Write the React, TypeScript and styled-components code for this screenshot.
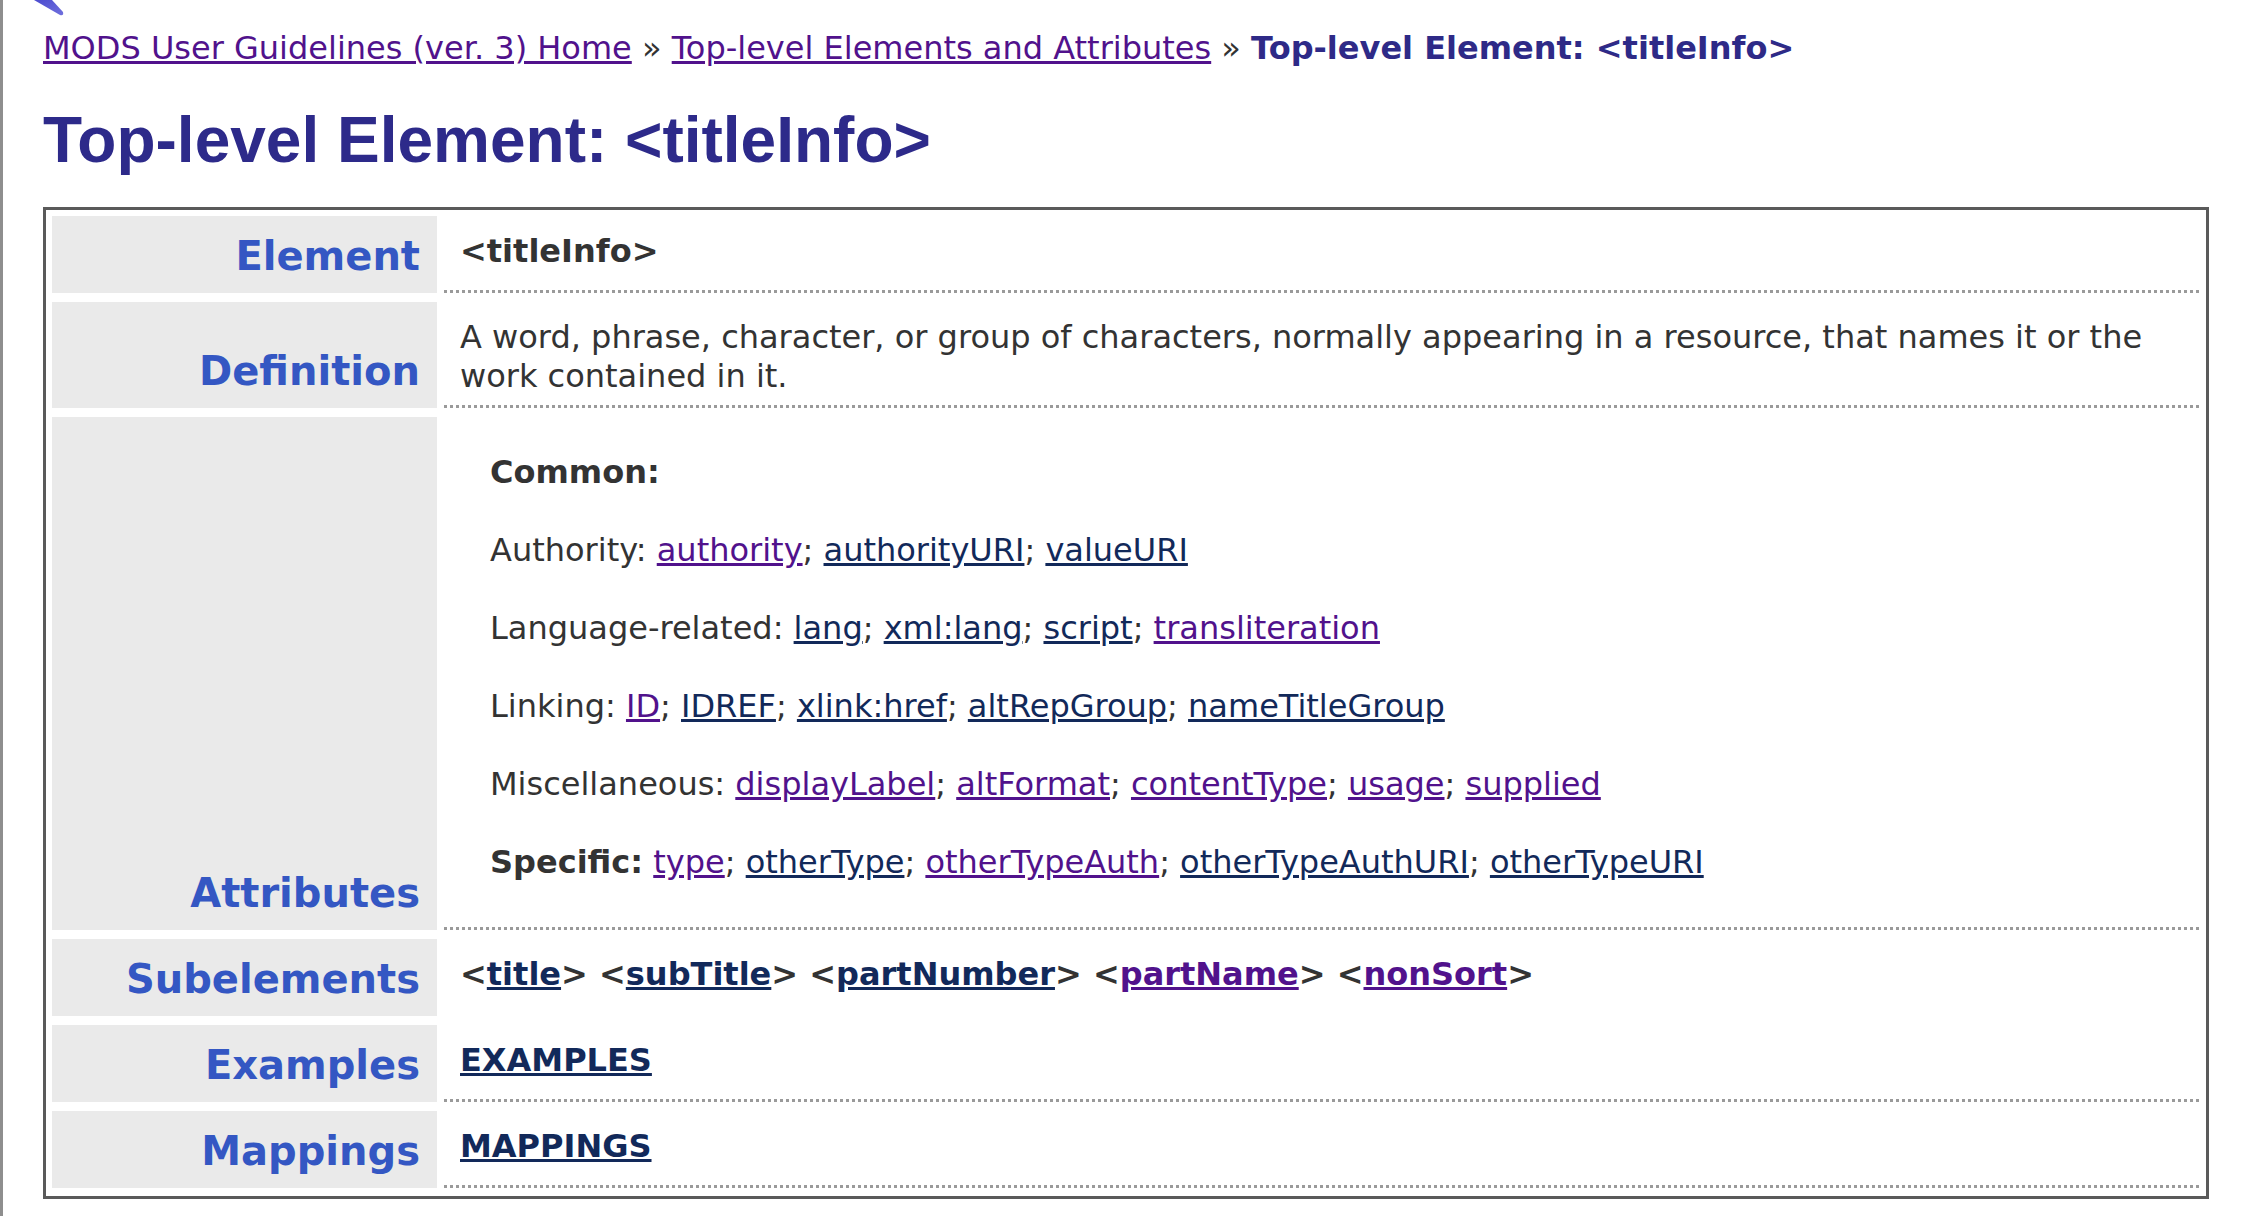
import React from "react";
import styled, { createGlobalStyle } from "styled-components";

const GlobalStyle = createGlobalStyle`
  html, body {
    margin: 0;
    padding: 0;
    background: #ffffff;
  }
  body {
    font-family: "DejaVu Sans", Verdana, sans-serif;
    color: #333333;
  }
`;

const Page = styled.div`
  position: relative;
  box-sizing: border-box;
  min-height: 100vh;
  border-left: 3px solid #8e8e8e;
  padding: 29px 35px 16px 40px;
`;

const CornerMark = styled.svg`
  position: absolute;
  top: 0;
  left: 25px;
  width: 40px;
  height: 18px;
`;

const Breadcrumb = styled.p`
  margin: 0;
  font-size: 32px;
  line-height: 39px;
  color: #333333;
  white-space: nowrap;
`;

const CrumbLink = styled.a`
  color: #51128c;
  text-decoration: underline;
`;

const CrumbCurrent = styled.strong`
  color: #2e2a87;
  font-weight: bold;
`;

const Title = styled.h1`
  margin: 35px 0 30px;
  font-family: "Liberation Sans", Arial, sans-serif;
  font-weight: bold;
  font-size: 64px;
  line-height: normal;
  color: #2d2a8a;
`;

const Table = styled.div`
  display: flex;
  flex-direction: column;
  gap: 9px;
  border: 3px solid #5a5a5a;
  padding: 6px 6px 8px;
`;

const Row = styled.div`
  display: grid;
  grid-template-columns: 385px 1fr;
  column-gap: 7px;
`;

const Label = styled.div`
  display: flex;
  align-items: flex-end;
  justify-content: flex-end;
  background: #eaeaea;
  padding: 17px 17px 13px 10px;
  font-weight: bold;
  font-size: 40px;
  line-height: 47px;
  color: #3457c3;
  text-align: right;
`;

const Content = styled.div<{ $dotted?: boolean }>`
  padding: 16px 16px 12px;
  font-size: 32px;
  line-height: 39px;
  color: #333333;
  background-image: ${(p) =>
    p.$dotted ? "linear-gradient(to right, #9a9a9a 50%, transparent 50%)" : "none"};
  background-size: 6px 3px;
  background-position: 0 100%;
  background-repeat: repeat-x;
`;

const Strong = styled.strong`
  font-weight: bold;
  color: #333333;
`;

const AttrList = styled.div`
  display: flex;
  flex-direction: column;
  gap: 39px;
  padding: 20px 0 36px 30px;
`;

const AttrLine = styled.div`
  white-space: nowrap;
`;

const Link = styled.a<{ $visited?: boolean; $bold?: boolean }>`
  color: ${(p) => (p.$visited ? "#51128c" : "#12295a")};
  font-weight: ${(p) => (p.$bold ? "bold" : "inherit")};
  text-decoration: underline;
`;

type L = { t: string; v?: boolean };

const LinkList: React.FC<{ items: L[] }> = ({ items }) => (
  <>
    {items.map((it, i) => (
      <React.Fragment key={it.t}>
        {i > 0 && "; "}
        <Link href="#" $visited={it.v}>
          {it.t}
        </Link>
      </React.Fragment>
    ))}
  </>
);

const subs: L[] = [
  { t: "title" },
  { t: "subTitle" },
  { t: "partNumber" },
  { t: "partName", v: true },
  { t: "nonSort", v: true },
];

export default function App() {
  return (
    <>
      <GlobalStyle />
      <Page>
        <CornerMark viewBox="0 0 40 18">
          <defs>
            <linearGradient id="cm" x1="0" y1="0" x2="1" y2="1">
              <stop offset="0" stopColor="#4b4bcf" />
              <stop offset="1" stopColor="#7070dd" />
            </linearGradient>
          </defs>
          <path d="M6 0 L24 0 L35 12 Q36 16 32 15 Z" fill="url(#cm)" />
        </CornerMark>

        <Breadcrumb>
          <CrumbLink href="#">MODS User Guidelines (ver. 3) Home</CrumbLink> »{" "}
          <CrumbLink href="#">Top-level Elements and Attributes</CrumbLink> »{" "}
          <CrumbCurrent>Top-level Element: &lt;titleInfo&gt;</CrumbCurrent>
        </Breadcrumb>

        <Title>Top-level Element: &lt;titleInfo&gt;</Title>

        <Table>
          <Row>
            <Label>Element</Label>
            <Content $dotted>
              <Strong>&lt;titleInfo&gt;</Strong>
            </Content>
          </Row>

          <Row>
            <Label>Definition</Label>
            <Content $dotted>
              A word, phrase, character, or group of characters, normally appearing in a
              resource, that names it or the work contained in it.
            </Content>
          </Row>

          <Row>
            <Label>Attributes</Label>
            <Content $dotted>
              <AttrList>
                <AttrLine>
                  <Strong>Common:</Strong>
                </AttrLine>
                <AttrLine>
                  Authority:{" "}
                  <LinkList
                    items={[
                      { t: "authority", v: true },
                      { t: "authorityURI" },
                      { t: "valueURI" },
                    ]}
                  />
                </AttrLine>
                <AttrLine>
                  Language-related:{" "}
                  <LinkList
                    items={[
                      { t: "lang" },
                      { t: "xml:lang" },
                      { t: "script" },
                      { t: "transliteration", v: true },
                    ]}
                  />
                </AttrLine>
                <AttrLine>
                  Linking:{" "}
                  <LinkList
                    items={[
                      { t: "ID", v: true },
                      { t: "IDREF" },
                      { t: "xlink:href" },
                      { t: "altRepGroup" },
                      { t: "nameTitleGroup" },
                    ]}
                  />
                </AttrLine>
                <AttrLine>
                  Miscellaneous:{" "}
                  <LinkList
                    items={[
                      { t: "displayLabel", v: true },
                      { t: "altFormat", v: true },
                      { t: "contentType", v: true },
                      { t: "usage", v: true },
                      { t: "supplied", v: true },
                    ]}
                  />
                </AttrLine>
                <AttrLine>
                  <Strong>Specific:</Strong>{" "}
                  <LinkList
                    items={[
                      { t: "type", v: true },
                      { t: "otherType" },
                      { t: "otherTypeAuth", v: true },
                      { t: "otherTypeAuthURI" },
                      { t: "otherTypeURI" },
                    ]}
                  />
                </AttrLine>
              </AttrList>
            </Content>
          </Row>

          <Row>
            <Label>Subelements</Label>
            <Content>
              <Strong>
                {subs.map((s, i) => (
                  <React.Fragment key={s.t}>
                    {i > 0 && " "}
                    &lt;
                    <Link href="#" $visited={s.v} $bold>
                      {s.t}
                    </Link>
                    &gt;
                  </React.Fragment>
                ))}
              </Strong>
            </Content>
          </Row>

          <Row>
            <Label>Examples</Label>
            <Content $dotted>
              <Link href="#" $bold>
                EXAMPLES
              </Link>
            </Content>
          </Row>

          <Row>
            <Label>Mappings</Label>
            <Content $dotted>
              <Link href="#" $bold>
                MAPPINGS
              </Link>
            </Content>
          </Row>
        </Table>
      </Page>
    </>
  );
}
